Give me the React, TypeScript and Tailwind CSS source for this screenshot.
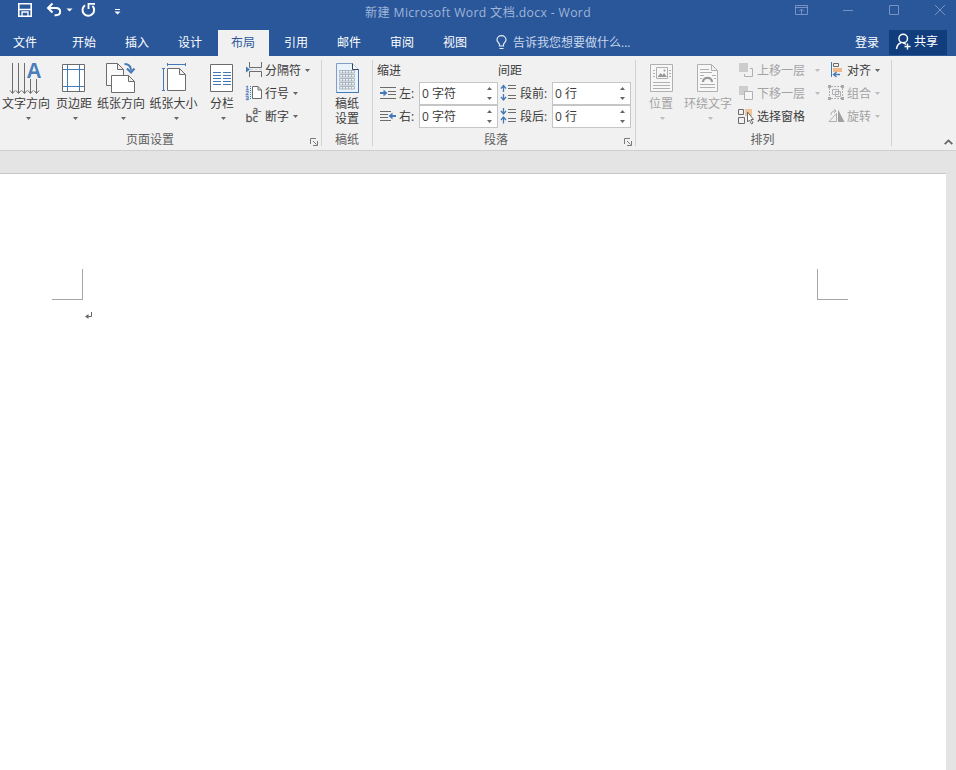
import type { ReactNode } from "react";

const INK = "#6c6c6c";
const BLUE = "#4479b8";
const MUTED = "#b0b0b0";

/* An icon whose shapes share the window's coordinate space. */
function Art({ x, y, w, h, children }: { x: number; y: number; w: number; h: number; children: ReactNode }) {
  return (
    <svg width={w} height={h} viewBox={`${x} ${y} ${w} ${h}`} fill="none" stroke={INK} className="block shrink-0 overflow-visible">
      {children}
    </svg>
  );
}

function Caret({ dim = false }: { dim?: boolean }) {
  return (
    <svg width="5" height="3" viewBox="0 0 5 3" className="block shrink-0">
      <path d="M0 0h5L2.500 3z" fill={dim ? "#bcbcbc" : "#666"} />
    </svg>
  );
}

function BigButton({ label, icon, className, dim, caret = "ml-1" }: { label: string; icon: ReactNode; className: string; dim?: boolean; caret?: string }) {
  return (
    <button className={`flex shrink-0 flex-col items-center ${className}`}>
      {icon}
      <span className={`h-4 leading-4 whitespace-nowrap ${dim ? "text-[#a3a3a3]" : ""}`}>{label}</span>
      <span className={`mt-[5px] ${caret}`}><Caret dim={dim} /></span>
    </button>
  );
}

function SmallButton({ label, icon, dim, caret = "" }: { label: string; icon: ReactNode; dim?: boolean; caret?: string }) {
  return (
    <button className="flex h-[23px] items-center">
      {icon}
      <span className={`whitespace-nowrap ${dim ? "text-[#a3a3a3]" : ""}`}>{label}</span>
      {caret && <span className={caret}><Caret dim={dim} /></span>}
    </button>
  );
}

function Launcher() {
  return (
    <svg width="8" height="8" viewBox="0 0 8 8" fill="none" stroke="#7a7a7a" className="block">
      <path d="M.5 6V.5H6M3 3l3.500 3.500M7.500 3v4.500H3" />
    </svg>
  );
}

function Group({ label, className, launcher, labelClass = "", children }: { label: string; className: string; launcher?: boolean; labelClass?: string; children: ReactNode }) {
  return (
    <section className={`flex shrink-0 flex-col ${className}`}>
      <div className="flex h-[76px] pt-[3px]">{children}</div>
      <div className="flex h-4 items-center leading-4 text-[#5f5f5f]">
        <span className="w-[11px]" />
        <span className={`flex-1 text-center ${labelClass}`}>{label}</span>
        <span className="w-[11px] pt-[4px]">{launcher && <Launcher />}</span>
      </div>
    </section>
  );
}

function Divider() {
  return <div className="mt-1 h-[86px] w-px shrink-0 bg-[#d2d2d2]" />;
}

function Spin({ value, className }: { value: string; className: string }) {
  return (
    <div className={`flex h-[23px] items-center justify-between border border-[#c6c6c6] bg-white pr-[5px] pl-[2px] ${className}`}>
      <span className="whitespace-pre">{value}</span>
      <svg width="5" height="13" viewBox="0 0 5 13" fill="#666">
        <path d="M0 3h5L2.500 0zM0 10h5L2.500 13z" />
      </svg>
    </div>
  );
}

const pageFold = (x: number, y: number, w: number, h: number, f: number) =>
  `M${x} ${y}h${w - f}l${f} ${f}v${h - f}h${-w}zM${x + w - f} ${y}v${f}h${f}`;

function TitleBar() {
  return (
    <header className="flex h-7 items-start justify-between">
      <div className="w-[166px]">
        <Art x={0} y={0} w={140} h={24}>
          <g stroke="#fff" strokeWidth="1.6">
            <path d="M18.800 3.800h12.400v12.400H18.800z" />
            <path d="M22 16v-4h6v4" strokeWidth="1.300" />
            <path d="M19 9.500h12" strokeWidth="1.500" />
            <path d="M52.500 3.500L48 8l4.500 4.500M48.500 8H56c5.500 0 5.500 7.200 0 7.200h-1.500" strokeWidth="2" />
            <path d="M85 5.200a5.800 5.800 0 1 0 7.500 .7" strokeWidth="2" />
            <path d="M88.500 9V3.800H95" strokeWidth="1.800" />
          </g>
          <path d="M66.500 8.500h6l-3 3zM114.500 11.500h6l-3 3z" fill="#fff" stroke="none" />
          <path d="M115 9.500h5" stroke="#fff" />
        </Art>
      </div>
      <h1 className="pt-[4px] text-[12.200px] leading-[18px] tracking-[0.36px] whitespace-nowrap text-[#9fb5d9]">
        新建 Microsoft Word 文档.docx - Word
      </h1>
      <div className="w-[166px]">
        <Art x={790} y={0} w={166} h={20}>
          <g stroke="#7892c3">
            <path d="M795.500 5.500h12v9h-12zM795.500 7.500h12M801.500 14V9M799 11.500L801.500 9l2.500 2.500" />
            <path d="M843 10.500h10M889.500 5.500h9v9h-9zM935 5l10 10M945 5l-10 10" />
          </g>
        </Art>
      </div>
    </header>
  );
}

const tabs = ["开始", "插入", "设计", "布局", "引用", "邮件", "审阅", "视图"];

function TabBar() {
  return (
    <nav className="flex h-7 items-end text-white">
      <span className="h-[26px] w-[58px] pl-[13px] leading-[25px]">文件</span>
      {tabs.map((t) => (
        <span key={t} className={`mx-px h-[26px] w-[51px] pl-[13px] leading-[25px] ${t === "布局" ? "bg-[#f1f1f1] text-[#2b579a]" : ""}`}>
          {t}
        </span>
      ))}
      <div className="flex h-[26px] flex-1 pl-[13px]">
        <Art x={495} y={30} w={18} h={24}>
          <g stroke="#e6edf8" strokeWidth="1.200">
            <path d="M499.500 46v-1.500c0-1.500-2.500-2.500-2.500-4.500a4.500 4.300 0 0 1 9 0c0 2-2.500 3-2.500 4.500V46zM499.500 48.500h4" />
          </g>
        </Art>
        <span className="leading-[25px] whitespace-nowrap text-[#c8d6ec]">告诉我您想要做什么...</span>
      </div>
      <span className="h-[26px] w-[34px] leading-[25px]">登录</span>
      <button className="mr-[9px] mb-px flex h-[25px] w-[58px] bg-[#123d7c] pl-[6px] leading-[23px]">
        <Art x={895} y={30} w={19} h={24}>
          <g stroke="#fff" strokeWidth="1.400">
            <circle cx="903.200" cy="38.500" r="4.300" />
            <path d="M896.500 49c.3-3.500 2.200-5.500 4.700-6.500M903 43c1.200 0 2 .5 3 1.500M907.500 43.500v6M904.500 46.500h6" />
          </g>
        </Art>
        <span>共享</span>
      </button>
    </nav>
  );
}

function PageSetup() {
  return (
    <Group label="页面设置" className="w-[321px]" launcher labelClass="pr-[21px]">
      <BigButton className="w-[52px]" label="文字方向" caret="ml-[5px]" icon={
        <Art x={0} y={59} w={52} h={37}>
          <path d="M12.500 63v30M18.500 63v30M24.500 63v30M30.500 79v14M36.500 79v14" />
          <path d="M10 90.500l2.500 3 2.500-3M16 90.500l2.500 3 2.500-3M22 90.500l2.500 3 2.500-3M28 90.500l2.500 3 2.500-3M34 90.500l2.500 3 2.500-3" />
          <text x="26.500" y="78" fontSize="22.500" fontWeight="700" fontFamily="Liberation Sans" textLength="15" lengthAdjust="spacingAndGlyphs" fill="#4a7ebb" stroke="none">A</text>
        </Art>} />
      <BigButton className="w-[44px]" label="页边距" caret="ml-[3px]" icon={
        <Art x={52} y={59} w={44} h={37}>
          <path d="M62.500 64.500h22v27h-22z" fill="#fff" />
          <path d="M67.500 65v26M79.500 65v26M63 69.500h21M63 86.500h21" stroke={BLUE} />
        </Art>} />
      <BigButton className="w-[50px]" label="纸张方向" caret="ml-[5px]" icon={
        <Art x={96} y={59} w={50} h={37}>
          <path d={pageFold(106.5, 63.5, 17, 22, 6)} fill="#fafafa" />
          <path d={pageFold(111.5, 75.5, 23, 17, 6)} fill="#fff" />
          <path d="M124.500 64c4 0 6.500 2 6.500 6.500" stroke={BLUE} strokeWidth="2" />
          <path d="M127 68.500l4 4 3.500-4" stroke={BLUE} strokeWidth="2" />
        </Art>} />
      <BigButton className="w-[55px]" label="纸张大小" caret="ml-[5px]" icon={
        <Art x={146} y={59} w={55} h={37}>
          <path d={pageFold(167.5, 68.5, 18, 22, 6)} fill="#fff" />
          <path d="M167 64.500h19M167.500 63v3M185.500 63v3M163.500 68v23M162 68.500h3M162 90.500h3" stroke={BLUE} />
        </Art>} />
      <BigButton className="w-[42px]" label="分栏" caret="ml-[3px]" icon={
        <Art x={201} y={59} w={42} h={37}>
          <path d="M210.500 64.500h22v27h-22z" fill="#fff" />
          <path d="M213 72.500h8M223 72.500h8M213 75.500h8M223 75.500h8M213 78.500h8M223 78.500h8M213 81.500h8M223 81.500h8M213 84.500h8M223 84.500h8" stroke={BLUE} />
        </Art>} />
      <div className="flex flex-col pl-[2px]">
        <SmallButton label="分隔符" caret="ml-1" icon={
          <Art x={245} y={59} w={20} h={23}>
            <path d="M249.500 62v5.500h12V62M249.500 77v-5.500h12V77" />
            <path d="M246 66.500v6l4-3z" fill={BLUE} stroke="none" />
            <path d="M250 69.500h3M255 69.500h2M259 69.500h3" stroke="#c3d3e6" />
          </Art>} />
        <SmallButton label="行号" caret="ml-1" icon={
          <Art x={245} y={82} w={20} h={23}>
            <path d={pageFold(252.5, 86.5, 9, 12, 3.5)} fill="#fff" />
            <g fill={BLUE} stroke={BLUE} strokeWidth=".3" fontSize="6" fontFamily="Liberation Sans">
              <text x="245.500" y="90">1</text><text x="245.500" y="95">2</text><text x="245.500" y="100">3</text>
            </g>
            <path d="M250.500 86v13" stroke={BLUE} strokeDasharray="1 1" />
          </Art>} />
        <SmallButton label="断字" caret="ml-1" icon={
          <Art x={245} y={105} w={20} h={23}>
            <text x="245.500" y="121.500" fontSize="11.500" fill="#555" stroke="#555" strokeWidth=".3" fontFamily="Open Sans">
              bc<tspan x="252.500" y="114" fontSize="10">a-</tspan>
            </text>
          </Art>} />
      </div>
    </Group>
  );
}

function Manuscript() {
  return (
    <Group label="稿纸" className="w-[50px]">
      <button className="flex w-[50px] flex-col items-center">
        <Art x={322} y={59} w={50} h={37}>
          <path d="M336.500 63.500h16l6 6v23h-22z" fill="#eaf3fb" stroke="#7f9fc6" />
          <path d="M352.500 63.500v6h6" fill="#fff" stroke="#33415a" />
          <path d="M358.500 69v23.500h-22" stroke="#4779b5" />
          {[70.5, 74.5, 78.5, 82.5, 86.5].map((y) => (
            <path key={y} stroke="#a0a6ae" strokeWidth=".8" d={`M339.500 ${y}h15v2.500h-15zM342.500 ${y}v2.500M345.500 ${y}v2.500M348.500 ${y}v2.500M351.500 ${y}v2.500`} />
          ))}
        </Art>
        <span className="h-[15px] leading-[15px]">稿纸</span>
        <span className="h-[15px] leading-[15px]">设置</span>
      </button>
    </Group>
  );
}

function Paragraph() {
  return (
    <Group label="段落" className="w-[262px]" launcher labelClass="pr-4">
      <div className="flex w-[125px] flex-col pl-1">
        <span className="h-[23px] leading-[23px]">缩进</span>
        <div className="flex h-[23px] items-center">
          <Art x={377} y={82} w={22} h={23}>
            <path d="M380 87.500h16M388 91.500h8M388 94.500h8M380 98.500h16" />
            <path d="M380 93h5" stroke={BLUE} strokeWidth="2" />
            <path d="M383.500 89.500v7l4-3.500z" fill={BLUE} stroke="none" />
          </Art>
          <span className="w-5">左:</span>
          <Spin value="0 字符" className="w-[79px]" />
        </div>
        <div className="flex h-[23px] items-center">
          <Art x={377} y={105} w={22} h={23}>
            <path d="M380 111.500h11M380 114.500h8M380 117.500h8M380 120.500h11" />
            <path d="M391 116h5" stroke={BLUE} strokeWidth="2" />
            <path d="M392.500 112.500v7l-4-3.500z" fill={BLUE} stroke="none" />
          </Art>
          <span className="w-5">右:</span>
          <Spin value="0 字符" className="w-[79px]" />
        </div>
      </div>
      <div className="flex flex-col">
        <span className="h-[23px] leading-[23px]">间距</span>
        <div className="flex h-[23px] items-center">
          <Art x={498} y={82} w={22} h={23}>
            <path d="M508 85.500h8M508 88.500h8M508 95.500h8M508 98.500h8" />
            <path d="M503.500 86v6M501 88.500l2.500-3 2.500 3M503.500 94v6M501 97l2.500 3 2.500-3" stroke={BLUE} strokeWidth="1.300" />
          </Art>
          <span className="w-[32px] whitespace-nowrap">段前:</span>
          <Spin value="0 行" className="w-[79px]" />
        </div>
        <div className="flex h-[23px] items-center">
          <Art x={498} y={105} w={22} h={23}>
            <path d="M508 109.500h8M508 112.500h8M508 118.500h8M508 121.500h8" />
            <path d="M503.500 108v6M501 111l2.500 3 2.500-3M503.500 117.500v6M501 120l2.500-3 2.500 3" stroke={BLUE} strokeWidth="1.300" />
          </Art>
          <span className="w-[32px] whitespace-nowrap">段后:</span>
          <Spin value="0 行" className="w-[79px]" />
        </div>
      </div>
    </Group>
  );
}

function Arrange() {
  return (
    <Group label="排列" className="w-[255px]" labelClass="pr-[2px]">
      <BigButton dim className="w-[50px]" label="位置" caret="ml-[3px]" icon={
        <Art x={635} y={59} w={50} h={37}>
          <g stroke={MUTED}>
            <path d="M649.500 64.500h22v27h-22z" fill="#f7f7f7" />
            <path d="M655.500 67.500h11v11h-11zM652 70.500h2M652 73.500h2M652 76.500h2M668 70.500h2M668 73.500h2M668 76.500h2M652 82.500h17M652 85.500h17M652 88.500h17" />
            <path d="M656.500 77l3-4 2 2 1.500-2 3 4z" fill="#999" stroke="none" /><circle cx="663.500" cy="70.500" r="1" fill="#999" stroke="none" />
          </g>
        </Art>} />
      <BigButton dim className="w-[44px]" label="环绕文字" caret="ml-[5px]" icon={
        <Art x={686} y={59} w={44} h={37}>
          <g stroke={MUTED}>
            <path d={pageFold(697.5, 64.5, 20, 27, 6)} fill="#f7f7f7" />
            <path d="M700 69.500h9M700 72.500h12M700 75.500h4M712 75.500h4M700 78.500h2M714 78.500h2M700 84.500h15M700 87.500h15" />
            <path d="M703 82c0-5.500 9-5.500 9 0" stroke="#999" strokeWidth="2.200" />
          </g>
        </Art>} />
      <div className="flex w-[96px] flex-col pl-[8px]">
        <SmallButton dim label="上移一层" caret="ml-[10px]" icon={
          <Art x={738} y={59} w={19} h={23}>
            <path d="M739 63h9v9h-9z" fill="#cdcdcd" stroke="none" /><path d="M750 68.500h2.500v8h-8V74" stroke={MUTED} />
          </Art>} />
        <SmallButton dim label="下移一层" caret="ml-[10px]" icon={
          <Art x={738} y={82} w={19} h={23}>
            <path d="M739 86h9v9h-9z" fill="#cdcdcd" stroke="none" /><path d="M744.500 91.500h8v8h-8z" stroke={MUTED} fill="#f5f5f5" />
          </Art>} />
        <SmallButton label="选择窗格" icon={
          <Art x={738} y={105} w={19} h={23}>
            <path d="M745 109h7v7h-7z" fill="#efc49b" stroke="none" />
            <path d="M738.500 109.500h5v5h-5zM738.500 117.500h6v6h-6z" />
            <path d="M747.500 112v10l2-2 2 4 1.500-1-2-3.500h2.500z" fill="#fff" />
          </Art>} />
      </div>
      <div className="flex flex-col">
        <SmallButton label="对齐" caret="ml-1" icon={
          <Art x={826} y={59} w={21} h={23}>
            <path d="M831.500 62v15" stroke={BLUE} />
            <path d="M833.500 63.500h5v3h-5z" /><path d="M833 68h9v4h-9z" fill="#efb98a" stroke="none" />
            <path d="M834 74.500h6M836.500 72l-3 2.500 3 2.500" stroke={BLUE} strokeWidth="1.300" />
          </Art>} />
        <SmallButton dim label="组合" caret="ml-1" icon={
          <Art x={826} y={82} w={21} h={23}>
            <g stroke={MUTED}>
              <path d="M829.500 88v9M842.500 88v9M831 86.500h10M831 98.500h10" strokeDasharray="2 1" />
              <path d="M832.500 89.500h6v5h-6zM835.500 91.500h5v5h-5z" />
            </g>
            <path d="M828 85h3v3h-3zM841 85h3v3h-3zM828 97h3v3h-3zM841 97h3v3h-3z" fill="#a9a9a9" stroke="none" />
          </Art>} />
        <SmallButton dim label="旋转" caret="ml-1" icon={
          <Art x={826} y={105} w={21} h={23}>
            <path d="M829 121.500h7.500v-8z" stroke={MUTED} /><path d="M838 109.500v12.500h6.500z" fill="#a0a0a0" stroke="none" />
            <path d="M831 115c0-3 1.500-4 4.500-4M834 109l2 2-2 2" stroke={MUTED} />
          </Art>} />
      </div>
    </Group>
  );
}

export default function App() {
  return (
    <div className="flex h-[770px] w-[956px] flex-col overflow-hidden bg-[#e4e4e4] font-['Open_Sans','Noto_Sans_CJK_SC',sans-serif] text-[12px] text-[#3c3c3c]">
      <div className="h-14 shrink-0 bg-[#2a579a]">
        <TitleBar />
        <TabBar />
      </div>
      <div className="flex h-[95px] shrink-0 border-b border-[#cfcfcf] bg-[#f1f1f1]">
        <PageSetup />
        <Divider />
        <Manuscript />
        <Divider />
        <Paragraph />
        <Divider />
        <Arrange />
        <Divider />
        <div className="flex flex-1 items-end justify-end pr-[3px] pb-[5px]">
          <svg width="9" height="6" viewBox="0 0 9 6" fill="none" stroke="#666" strokeWidth="1.800"><path d="M.7 5.200L4.500 1.400l3.800 3.800" /></svg>
        </div>
      </div>
      <main className="mt-[22px] mr-[10px] flex-1 border-t border-[#c8c8c8] bg-white">
        <div className="flex justify-between pt-[95px] pr-[98px] pl-[52px]">
          <div className="h-[31px] w-[31px] border-r border-b border-[#a6a6a6]" />
          <div className="h-[31px] w-[31px] border-b border-l border-[#a6a6a6]" />
        </div>
        <div className="pt-[11px] pl-[84px]">
          <svg width="9" height="9" viewBox="84 311 9 9" fill="none" stroke="#666">
            <path d="M91.500 312v4.500H86" /><path d="M88.500 314v5l-3.500-2.500z" fill="#666" stroke="none" />
          </svg>
        </div>
      </main>
    </div>
  );
}
